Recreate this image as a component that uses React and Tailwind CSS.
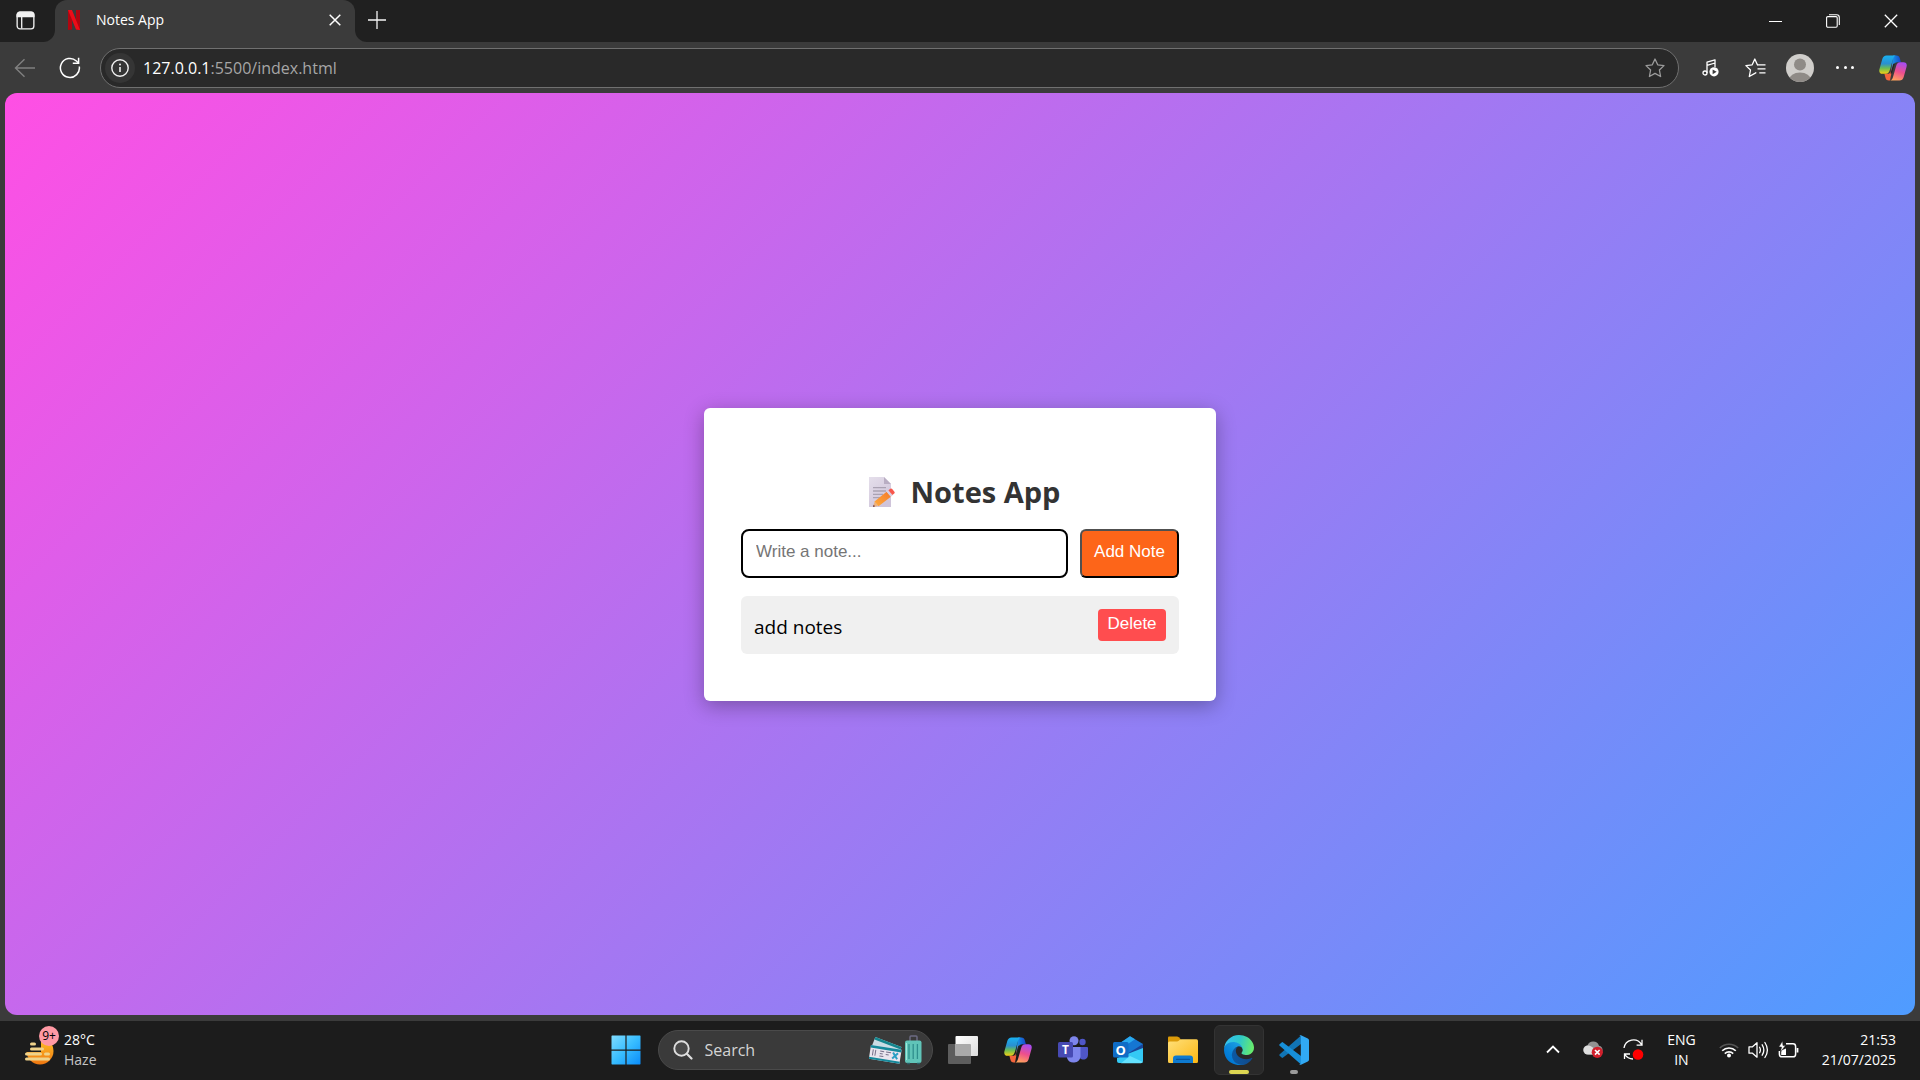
import React, { useState } from "react";

const TabActionsIcon = () => (
  <svg width="19" height="19" viewBox="0 0 20 20" fill="none" stroke="#f2f2f2" strokeWidth="1.4">
    <rect x="1.2" y="1.2" width="17.6" height="17.6" rx="3" />
    <path d="M1.2 6V4.200a3 3 0 0 1 3-3h11.600a3 3 0 0 1 3 3V6z" fill="#f2f2f2" />
    <path d="M6 6v12.500" />
  </svg>
);

const NLogo = () => (
  <svg width="12" height="20" viewBox="0 0 12 20">
    <path d="M0 0h4v19.6L0 20z" fill="#b00610" />
    <path d="M8 0h4v20l-4-.5z" fill="#b00610" />
    <path d="M0 0h4l8 20-4-.5z" fill="#ee0c18" />
  </svg>
);

const CloseIcon = ({ size = 12, width = 1.5 }) => (
  <svg width={size} height={size} viewBox="0 0 12 12" stroke="#fff" strokeWidth={width} fill="none">
    <path d="M.7.7l10.6 10.6M11.3.7L.7 11.3" />
  </svg>
);

const PlusIcon = () => (
  <svg width="18" height="18" viewBox="0 0 18 18" stroke="#f5f5f5" strokeWidth="1.3">
    <path d="M9 0v18M0 9h18" />
  </svg>
);

const RestoreIcon = () => (
  <svg width="14" height="14" viewBox="0 0 14 14" fill="none" stroke="#fff" strokeWidth="1.1">
    <rect x=".6" y="2.6" width="10.6" height="10.6" rx="1.2" />
    <path d="M3 .7h7.6a2.7 2.7 0 0 1 2.7 2.7V11" />
  </svg>
);

const BackIcon = () => (
  <svg width="22" height="20" viewBox="0 0 22 20" fill="none" stroke="#808080" strokeWidth="1.4">
    <path d="M21 10H1.5M10.5 1.3L1.5 10l9 8.7" />
  </svg>
);

const ReloadIcon = () => (
  <svg width="22" height="22" viewBox="0 0 22 22" fill="none" stroke="#fff" strokeWidth="1.5">
    <path d="M20.3 9.5A9.5 9.5 0 1 1 17.4 4L19.5 6" />
    <path d="M19.6.8v5.5h-5.8" />
  </svg>
);

const InfoIcon = () => (
  <svg width="18" height="18" viewBox="0 0 18 18" fill="none" stroke="#f0f0f0" strokeWidth="1.4">
    <circle cx="9" cy="9" r="8.2" />
    <path d="M9 8v5" strokeWidth="1.6" />
    <circle cx="9" cy="5.4" r="1" fill="#f0f0f0" stroke="none" />
  </svg>
);

const StarIcon = () => (
  <svg width="20" height="20" viewBox="0 0 20 20" fill="none" stroke="#9b9b9b" strokeWidth="1.3" strokeLinejoin="round">
    <path d="M10 1l2.7 5.8 6.3.8-4.6 4.4 1.2 6.5L10 15.4l-5.6 3.1 1.2-6.5L1 7.6l6.3-.8z" />
  </svg>
);

const MusicIcon = () => (
  <svg width="18" height="18" viewBox="0 0 18 18" fill="none" stroke="#fff" strokeWidth="1.3">
    <circle cx="3" cy="14" r="2" />
    <path d="M5 14V3.2l8-2.4V8M5 6.4l8-2.4" strokeLinejoin="round" />
    <circle cx="12" cy="12.8" r="4.6" fill="#fff" stroke="none" />
    <path d="M10.6 10.4v4.8l4-2.4z" fill="#3b3b3b" stroke="none" />
  </svg>
);

const FavoritesIcon = () => (
  <svg width="21" height="20" viewBox="0 0 21 20" fill="none" stroke="#fff" strokeWidth="1.3" strokeLinejoin="round">
    <path d="M13 6.8h-.6L9.8 1 7.2 6.8.9 7.6 5.5 12l-1.2 6.5 5.5-3.1 1.5-.9" />
    <path d="M12.5 6.8h8M12.5 10.8h8M14.3 14.8h6.2" />
  </svg>
);

const Avatar = () => (
  <svg width="28" height="28" viewBox="0 0 28 28">
    <clipPath id="avatar-clip"><circle cx="14" cy="14" r="14" /></clipPath>
    <g clipPath="url(#avatar-clip)">
      <rect width="28" height="28" fill="#d0cecb" />
      <circle cx="14" cy="10.5" r="6" fill="#8f8b87" />
      <ellipse cx="14" cy="26" rx="11" ry="7.6" fill="#8f8b87" />
    </g>
  </svg>
);

const CopilotIcon = ({ id }) => (
  <svg width="28" height="26" viewBox="0 0 28 26">
    <defs>
      <linearGradient id={id + "a"} x1="0" y1="0" x2="0" y2="1">
        <stop offset="0" stopColor="#18b2f2" /><stop offset=".45" stopColor="#2a8fd0" />
        <stop offset=".7" stopColor="#6cbd52" /><stop offset="1" stopColor="#f4cf14" />
      </linearGradient>
      <linearGradient id={id + "b"} x1=".6" y1="0" x2=".3" y2="1">
        <stop offset="0" stopColor="#a84cf0" /><stop offset=".5" stopColor="#ee4f8c" />
        <stop offset="1" stopColor="#ffa45c" />
      </linearGradient>
      <linearGradient id={id + "c"} x1="0" y1="0" x2="1" y2="0">
        <stop offset="0" stopColor="#18a0ee" /><stop offset="1" stopColor="#1746c8" />
      </linearGradient>
    </defs>
    <path d="M14 .4h3.4c2 0 3 1.2 3.5 3l1 3.8h-3.4c-2.600 0-3.600 1.300-4.200 3.400L12 18z" fill={"url(#" + id + "c)"} />
    <path d="M14.500 7L11 25.600H9.800c-2 0-3-1.200-3.400-3l-1-3.800h3.200c2 0 3-1.300 3.600-3.400z" fill="#f4643c" />
    <path d="M7.500.4h9.300c-1.700.5-2.300 2-2.800 3.600L11 14.600c-.8 2.800-2 4.200-4.200 4.200H3.500c-2.700 0-3.800-2-3-4.800L3.300 4C4 1.600 5.400.4 7.500.4z" fill={"url(#" + id + "a)"} />
    <path d="M20.500 25.600h-9.300c1.700-.5 2.300-2 2.800-3.600l3-10.600c.8-2.800 2-4.200 4.200-4.200h3.300c2.700 0 3.800 2 3 4.800L24.700 22c-.7 2.400-2.100 3.600-4.200 3.600z" fill={"url(#" + id + "b)"} />
    <path d="M14.300 8.800h1.800c-.6.700-.9 1.500-1.200 2.600l-2 7h-1.500z" fill="#242424" />
  </svg>
);

const MemoIcon = () => (
  <svg width="28" height="32" viewBox="0 0 28 32">
    <defs>
      <linearGradient id="sheet" x1="0" y1="0" x2=".6" y2="1">
        <stop offset="0" stopColor="#e5dfeb" /><stop offset="1" stopColor="#cfc4da" />
      </linearGradient>
      <linearGradient id="pencil" x1="0" y1="1" x2="1" y2="0">
        <stop offset="0" stopColor="#ffac3c" /><stop offset="1" stopColor="#f47a2c" />
      </linearGradient>
    </defs>
    <path d="M1 1h15l7 7v23H1z" fill="url(#sheet)" />
    <path d="M16 1l7 7h-7z" fill="#b9aec3" />
    <path d="M5 11.700h13M5 15h13M5 18.400h10M5 21.700h7" stroke="#aaa2b3" strokeWidth="1.300" />
    <path d="M5 31l1.800-5.800L9.900 30z" fill="#edb07c" />
    <path d="M5 31l.7-2.300 1.300 1.500z" fill="#542635" />
    <path d="M6.500 25.500L18.600 15.800l4.300 4.900L10.500 30.300z" fill="url(#pencil)" />
    <path d="M18.600 15.800l1.800-1.500 4.300 4.900-1.800 1.500z" fill="#d8d0e2" />
    <path d="M20.400 14.300l2-1.500c.7-.5 1.300-.4 1.800.2l2.200 2.700c.5.600.4 1.300-.2 1.800l-1.800 1.500z" fill="#f7574c" />
  </svg>
);

const HazeIcon = () => (
  <svg width="30" height="28" viewBox="0 0 30 28">
    <defs>
      <linearGradient id="sun" x1="0" y1="0" x2="0" y2="1">
        <stop offset="0" stopColor="#ffc62b" /><stop offset="1" stopColor="#ef7610" />
      </linearGradient>
    </defs>
    <circle cx="15" cy="13" r="13.500" fill="url(#sun)" />
    <path d="M0 0h16v14H0z" fill="#1c1c1c" />
    <path d="M6.500 6h3M6.500 11h11M1.500 16h14M20.500 16h3M1.500 21h22" stroke="#efd28a" strokeWidth="3" strokeLinecap="round" />
  </svg>
);

const StartIcon = () => (
  <svg width="30" height="30" viewBox="0 0 30 30">
    <defs>
      <linearGradient id="win" x1="0" y1="0" x2="1" y2="1">
        <stop offset="0" stopColor="#80dcff" /><stop offset=".5" stopColor="#38bdff" /><stop offset="1" stopColor="#0a8cfa" />
      </linearGradient>
    </defs>
    <path d="M1 .5h13.400v14H.5V1zM15.600.5H29l.5.5v13.500H15.600zM.5 15.700h13.900v13.800H1l-.5-.5zM15.600 15.700h13.900V29l-.5.500H15.600z" fill="url(#win)" />
  </svg>
);

const SearchIcon = () => (
  <svg width="20" height="20" viewBox="0 0 20 20" fill="none" stroke="#dedede" strokeLinecap="round">
    <circle cx="8.500" cy="8.500" r="7.200" strokeWidth="1.900" fill="#4a4a4a" />
    <path d="M13.800 13.800l4.700 4.700" strokeWidth="2.200" />
  </svg>
);

const TravelIcon = () => (
  <svg width="54" height="30" viewBox="0 0 54 30">
    <g transform="rotate(21 6 3)">
      <rect x="6" y="2" width="28" height="11" fill="#c9dce4" />
      <path d="M6 2h28v2.500H6z" fill="#14868f" />
    </g>
    <g transform="rotate(9 2 10)">
      <rect x="2" y="10" width="31" height="14" fill="#e9e4ee" />
      <path d="M2 10h31v2.600H2zM2 22h31v2H2z" fill="#15899b" />
      <path d="M5 14v6M7.500 14v6M12 14.500h4M12 17h3M12 19.500h4M18 14.500h5M18 17h3" stroke="#77708a" strokeWidth="1" />
      <path d="M25 14l5 6M30 14l-5 6" stroke="#2a9fc4" strokeWidth="2" />
    </g>
    <path d="M41 6V2q0-1 1-1h5q1 0 1 1v4" fill="none" stroke="#6c6b83" strokeWidth="1.500" />
    <rect x="36" y="5.500" width="16.500" height="22.500" rx="2" fill="#60c4b8" />
    <path d="M40 9v15M44.200 9v15M48.400 9v15" stroke="#2f8f8d" strokeWidth="1.300" />
    <path d="M37.500 8v17" stroke="#a0e6db" strokeWidth="1" />
    <path d="M38 28.500h3M48 28.500h3" stroke="#2c5f68" strokeWidth="1.500" />
  </svg>
);

const TaskViewIcon = () => (
  <svg width="30" height="28" viewBox="0 0 30 28">
    <defs>
      <linearGradient id="tv" x1="0" y1="0" x2="1" y2="1">
        <stop offset="0" stopColor="#fff" /><stop offset="1" stopColor="#dcdcdc" />
      </linearGradient>
    </defs>
    <rect y="8" width="23" height="20" rx="1" fill="#5d5d5d" />
    <rect x="7.500" width="22.500" height="20" rx="1" fill="url(#tv)" />
    <path d="M7.500 8H22a1 1 0 0 1 1 1v11H7.500z" fill="#aaa" />
  </svg>
);

const TeamsIcon = () => (
  <svg width="30" height="28" viewBox="0 0 30 28">
    <circle cx="24.500" cy="6" r="3.200" fill="#4f56c8" />
    <path d="M20 11h9a1 1 0 0 1 1 1v6.500c0 3.500-2 5-4.500 5S20 22 20 18.500z" fill="#4f56c8" />
    <circle cx="16" cy="4.800" r="4.500" fill="#7d85ec" />
    <path d="M9 11h13.500v9.500a7 7 0 0 1-13.500 1.500z" fill="#7d85ec" />
    <rect y="6" width="15" height="15.500" rx="1.500" fill="#474ab3" />
    <text x="7.500" y="17.500" textAnchor="middle" fontSize="12" fontWeight="700" fontFamily="Open Sans, sans-serif" fill="#fff">T</text>
  </svg>
);

const OutlookIcon = () => (
  <svg width="30" height="28" viewBox="0 0 30 28">
    <path d="M4 9L17 .3 30 8v5L17 20 4 18z" fill="#1576d2" />
    <path d="M5 8.500L17 .3l5 3L9 12z" fill="#29a9ee" />
    <path d="M30 8v5L17 20l-3-2z" fill="#1a4598" />
    <path d="M30 12v13a2 2 0 0 1-2 2H6a2 2 0 0 1-2-2v-3z" fill="#34c9f5" />
    <path d="M17 20l13 6-2 1.200H8z" fill="#64e2ff" />
    <rect y="6" width="15.500" height="15.500" rx="1.500" fill="#0f6cc6" />
    <text x="7.750" y="18.500" textAnchor="middle" fontSize="13" fontWeight="700" fontFamily="Open Sans, sans-serif" fill="#fff">O</text>
  </svg>
);

const FolderIcon = () => (
  <svg width="30" height="28" viewBox="0 0 30 28">
    <defs>
      <linearGradient id="fold" x1="0" y1="0" x2="1" y2="1">
        <stop offset="0" stopColor="#ffe07a" /><stop offset="1" stopColor="#fcb713" />
      </linearGradient>
    </defs>
    <path d="M0 1.500Q0 .5 1 .5h8q1 0 1.800.8L13 3.500v4H0z" fill="#dc9b09" />
    <path d="M0 7q0-1.500 1.500-1.500H9q1 0 1.800-.8l1-.9q.7-.5 1.700-.5h15Q30 3.300 30 5v20.500q0 1.500-1.500 1.500h-27Q0 27 0 25.500z" fill="url(#fold)" />
    <path d="M5 27v-4.500q0-3 3-3h14q3 0 3 3V27z" fill="#0e7ad0" />
    <path d="M8.500 23.300h13" stroke="#08559e" strokeWidth="1.300" strokeLinecap="round" />
  </svg>
);

const EdgeIcon = () => (
  <svg width="30" height="30" viewBox="0 0 256 256">
    <defs>
      <linearGradient id="e1" x1="63" y1="177" x2="241" y2="177" gradientUnits="userSpaceOnUse"><stop offset="0" stopColor="#0c59a4" /><stop offset="1" stopColor="#114a8b" /></linearGradient>
      <linearGradient id="e2" x1="157" y1="100" x2="46" y2="221" gradientUnits="userSpaceOnUse"><stop offset="0" stopColor="#1b9de2" /><stop offset=".2" stopColor="#1595df" /><stop offset=".7" stopColor="#0680d7" /><stop offset="1" stopColor="#0078d4" /></linearGradient>
      <linearGradient id="e3" x1="10" y1="60" x2="240" y2="120" gradientUnits="userSpaceOnUse"><stop offset="0" stopColor="#35c1f1" /><stop offset=".5" stopColor="#2fc9c8" /><stop offset="1" stopColor="#66eb6e" /></linearGradient>
    </defs>
    <path fill="url(#e1)" d="M235.700 195.500a93.700 93.700 0 0 1-10.600 4.700 101.900 101.900 0 0 1-35.900 6.400c-47.300 0-88.500-32.500-88.500-74.300a31.500 31.500 0 0 1 16.400-27.300c-42.800 1.800-53.800 46.400-53.800 72.500 0 74 68.100 81.400 82.800 81.400 7.900 0 19.800-2.300 27-4.600l1.300-.4a128.300 128.300 0 0 0 66.600-52.800 4 4 0 0 0-5.300-5.600z" />
    <path fill="url(#e2)" d="M105.700 241.400a79.200 79.200 0 0 1-22.700-21.300 80.700 80.700 0 0 1 29.500-120c3.200-1.500 8.500-4.100 15.600-4a32.400 32.400 0 0 1 25.700 13 31.900 31.900 0 0 1 6.300 18.700c0-.2 24.500-79.600-80-79.600-43.900 0-80 41.600-80 78.200a130.200 130.200 0 0 0 12.100 56 128 128 0 0 0 156.400 67 75.500 75.500 0 0 1-62.800-8z" />
    <path fill="url(#e3)" d="M152.300 148.900c-.9 1-3.400 2.500-3.400 5.600 0 2.600 1.700 5.200 4.800 7.300 14.300 10 41.400 8.600 41.500 8.600a59.600 59.600 0 0 0 30.300-8.300A61.400 61.400 0 0 0 256 109.200c.3-22.400-8-37.300-11.300-43.900C223.500 23.900 177.700 0 128 0A128 128 0 0 0 0 126.200c.5-36.500 36.800-66 80-66 3.500 0 23.500.3 42 10 16.300 8.600 24.900 19 30.800 29.200 6.200 10.700 7.300 24.100 7.300 29.500s-2.700 13.300-7.800 20z" />
  </svg>
);

const CodeIcon = () => (
  <svg width="30" height="30" viewBox="0 0 30 30">
    <path d="M.6 20.700l2 1.900q.7.600 1.500 0L22 9V1.500q0-.9-.8-.3L.7 19.200q-.8.700-.1 1.500z" fill="#1174b4" />
    <path d="M.6 9.300l2-1.900q.7-.6 1.500 0L22 21v7.500q0 .9-.8.3L.7 10.800q-.8-.7-.1-1.500z" fill="#178fd8" />
    <path d="M22 .2l6.800 3.200Q30 4 30 5.200v19.600q0 1.200-1.200 1.800L22 29.800q-1.300.3-1.800-.8.900.5 1.600-.6V1.600q-.7-1.100-1.600-.6.500-1.100 1.800-.8z" fill="#31a9f4" />
  </svg>
);

const CloudErrorIcon = () => (
  <svg width="20" height="17" viewBox="0 0 20 17">
    <path d="M5 13.500a4.500 4.500 0 0 1-.6-9A6.200 6.200 0 0 1 16 4.700a4.500 4.500 0 0 1 0 8.800z" fill="#929292" />
    <path d="M5 13.500a4.500 4.500 0 0 1 0-9q3.500 0 8 5v4z" fill="#dedede" />
    <circle cx="14.300" cy="11.300" r="5.600" fill="#d1202c" />
    <path d="M12 9l4.600 4.600M16.600 9L12 13.600" stroke="#fff" strokeWidth="1.600" />
  </svg>
);

const UpdateIcon = () => (
  <svg width="21" height="21" viewBox="0 0 21 21" fill="none" stroke="#fff" strokeWidth="1.300">
    <path d="M1 9A9.500 9.500 0 0 1 18.500 5.500M19 .8v5.400h-5.400M7 15H1.500v5M1.500 15.200q3.300 4.800 8.500 4.800" />
    <circle cx="15" cy="15.500" r="5.300" fill="#f00" stroke="none" />
  </svg>
);

const WifiIcon = () => (
  <svg width="20" height="16" viewBox="0 0 20 16" fill="none" strokeWidth="1.600">
    <path d="M.8 6a13 13 0 0 1 18.400 0" stroke="#555" />
    <path d="M3.200 8.800a9.600 9.600 0 0 1 13.600 0M5.800 11.600a6 6 0 0 1 8.400 0" stroke="#fff" />
    <circle cx="10" cy="13.600" r="2" fill="#fff" />
  </svg>
);

const SpeakerIcon = () => (
  <svg width="21" height="18" viewBox="0 0 21 18" fill="none" stroke="#fff" strokeWidth="1.300" strokeLinejoin="round" strokeLinecap="round">
    <path d="M1 5.800h3.500L9 1.800v14.400l-4.500-4H1z" />
    <path d="M11.600 6.200q1.600 2.800 0 5.600M14.200 3.800q3.300 5.200 0 10.400M16.900 1.500q5 7.500 0 15" />
  </svg>
);

const BatteryIcon = () => (
  <svg width="21" height="18" viewBox="0 0 21 18" fill="none" stroke="#fff" strokeWidth="1.500">
    <path d="M8 2.800h7a2.600 2.600 0 0 1 2.600 2.600v7.800a2.600 2.600 0 0 1-2.600 2.600H4a2.600 2.600 0 0 1-2.600-2.600V10" />
    <path d="M19.500 7v4.500" strokeWidth="1.800" />
    <path d="M3.200 14V9.500L8 7.500V14z" fill="#fff" stroke="none" />
    <path d="M4.500 0L.8 6h2.700L2.500 11l5-6.400H5z" fill="#fff" stroke="#1c1c1c" strokeWidth=".5" />
  </svg>
);

const TaskButton = ({ label, children }) => (
  <button aria-label={label} className="flex h-[50px] w-[55px] items-center justify-center">{children}</button>
);

function TitleBar() {
  return (
    <header className="flex h-[42px] shrink-0 justify-between bg-[#202020]">
      <div className="flex min-w-0">
        <div className="bg-[#3b3b3b]">
          <button aria-label="Tab actions" className="flex h-full w-[55px] items-center justify-center rounded-br-xl bg-[#202020] pr-[5px] pb-px">
            <TabActionsIcon />
          </button>
        </div>
        <div className="flex w-[300px] items-center rounded-t-xl bg-[#3b3b3b] pr-[14px] pb-0.5 pl-[13px] text-white">
          <NLogo />
          <span className="grow pl-4 text-sm leading-5">Notes App</span>
          <button aria-label="Close tab"><CloseIcon /></button>
        </div>
        <div className="bg-[#3b3b3b]">
          <button aria-label="New tab" className="flex h-full w-11 items-center justify-center rounded-bl-xl bg-[#202020] pb-[3px]">
            <PlusIcon />
          </button>
        </div>
      </div>
      <div className="flex">
        <button aria-label="Minimize" className="flex w-[58px] items-center justify-center"><span className="h-px w-[13px] bg-white" /></button>
        <button aria-label="Restore" className="flex w-[58px] items-center justify-center"><RestoreIcon /></button>
        <button aria-label="Close" className="flex w-[58px] items-center justify-center"><CloseIcon size={14} width={1.1} /></button>
      </div>
    </header>
  );
}

function Toolbar() {
  return (
    <nav className="flex h-[51px] shrink-0 items-center pr-[13px] pl-[14px]">
      <button aria-label="Back"><BackIcon /></button>
      <button aria-label="Refresh" className="ml-[23px]"><ReloadIcon /></button>
      <div className="ml-[19px] flex h-10 grow items-center rounded-full border border-[#707070] bg-[#292929] pr-[13px] pl-1 text-white">
        <button aria-label="Site information" className="flex size-[30px] items-center justify-center rounded-full bg-[#353535]"><InfoIcon /></button>
        <p className="grow pl-2 text-base leading-6">127.0.0.1<span className="text-[#a6a6a6]">:5500/index.html</span></p>
        <button aria-label="Add to favorites"><StarIcon /></button>
      </div>
      <button aria-label="Media" className="ml-[23px]"><MusicIcon /></button>
      <button aria-label="Favorites" className="ml-[25px]"><FavoritesIcon /></button>
      <button aria-label="Profile" className="ml-5"><Avatar /></button>
      <button aria-label="Settings and more" className="ml-[22px] flex w-[18px] justify-between">
        <span className="size-[3px] rounded-full bg-white" />
        <span className="size-[3px] rounded-full bg-white" />
        <span className="size-[3px] rounded-full bg-white" />
      </button>
      <button aria-label="Copilot" className="ml-[25px]"><CopilotIcon id="top" /></button>
    </nav>
  );
}

function NotesCard() {
  const [notes, setNotes] = useState(["add notes"]);
  const [draft, setDraft] = useState("");
  const add = (e) => {
    e.preventDefault();
    if (draft.trim()) {
      setNotes([...notes, draft.trim()]);
      setDraft("");
    }
  };
  return (
    <section className="w-full max-w-[512px] rounded-md bg-white px-[37px] pt-16 pb-[47px] shadow-[0_5px_20px_rgba(0,0,0,0.3)]">
      <h1 className="flex items-center justify-center gap-[15px] pl-2 text-[29px] leading-10 font-bold text-[#333]">
        <MemoIcon />
        <span>Notes App</span>
      </h1>
      <form onSubmit={add} className="mt-[17px] flex gap-3 font-['Liberation_Sans',sans-serif] text-[17px] leading-5">
        <input
          aria-label="Note"
          value={draft}
          onChange={(e) => setDraft(e.target.value)}
          placeholder="Write a note..."
          className="h-[49px] min-w-0 grow rounded-lg border-2 border-black px-[13px] pb-0.5 text-black outline-none placeholder:text-[#757575]"
        />
        <button className="h-[49px] w-[99px] rounded-md border-2 border-t-[#505050] border-r-black border-b-black border-l-[#505050] bg-[#fd6519] pb-0.5 text-white">
          Add Note
        </button>
      </form>
      <ul className="mt-[18px] space-y-3">
        {notes.map((note, i) => (
          <li key={i} className="flex items-start justify-between rounded-md bg-[#f0f0f0] p-[13px]">
            <span className="pt-1 text-[19px] leading-7 text-black">{note}</span>
            <button
              onClick={() => setNotes(notes.filter((_, n) => n !== i))}
              className="h-8 w-[68px] rounded bg-[#ff4d4f] pb-0.5 font-['Liberation_Sans',sans-serif] text-[17px] leading-5 text-white"
            >
              Delete
            </button>
          </li>
        ))}
      </ul>
    </section>
  );
}

function Taskbar() {
  return (
    <footer className="grid h-[59px] shrink-0 grid-cols-[1fr_auto_1fr] items-center bg-[#1c1c1c] pb-0.5 text-sm leading-5 text-white">
      <button className="flex items-center gap-[9px] justify-self-start pl-[25px] text-left">
        <span className="relative pt-1">
          <HazeIcon />
          <span className="absolute -top-2 left-[14px] flex size-5 items-center justify-center rounded-full bg-[#ff99a4] text-xs text-black">9+</span>
        </span>
        <span>
          <span className="block">28°C</span>
          <span className="block text-[#c4c4c4]">Haze</span>
        </span>
      </button>
      <div className="flex items-center">
        <TaskButton label="Start"><StartIcon /></TaskButton>
        <label className="mr-[3px] ml-1 flex h-10 w-[275px] items-center rounded-full border border-[#4a4a4a] bg-[#3a3a3a] pr-[9px] pl-[14px]">
          <SearchIcon />
          <input aria-label="Search" placeholder="Search" className="ml-3 w-0 grow bg-transparent text-base leading-6 outline-none placeholder:text-[#d4d4d4]" />
          <TravelIcon />
        </label>
        <TaskButton label="Task view"><TaskViewIcon /></TaskButton>
        <TaskButton label="Copilot"><CopilotIcon id="task" /></TaskButton>
        <TaskButton label="Teams"><TeamsIcon /></TaskButton>
        <TaskButton label="Outlook"><OutlookIcon /></TaskButton>
        <TaskButton label="File Explorer"><FolderIcon /></TaskButton>
        <button aria-label="Edge" className="relative mx-[3px] flex h-[50px] w-[50px] items-center justify-center rounded-md border border-[#333] bg-[#292929]">
          <EdgeIcon />
          <span className="absolute bottom-0 h-1 w-5 rounded-full bg-[#dcd652]" />
        </button>
        <button aria-label="Visual Studio Code" className="relative flex h-[50px] w-[55px] items-center justify-center">
          <CodeIcon />
          <span className="absolute bottom-[1px] h-1 w-2 rounded-full bg-[#9a9a9a]" />
        </button>
      </div>
      <div className="flex items-center justify-self-end pr-6">
        <button aria-label="Show hidden icons">
          <svg width="14" height="9" viewBox="0 0 14 9" fill="none" stroke="#fff" strokeWidth="1.800"><path d="M1 7.500l6-6 6 6" /></svg>
        </button>
        <button aria-label="OneDrive" className="ml-[23px]"><CloudErrorIcon /></button>
        <button aria-label="Windows Update" className="ml-5"><UpdateIcon /></button>
        <button className="ml-[23px] text-center"><span className="block">ENG</span><span className="block">IN</span></button>
        <button aria-label="Network, volume and battery" className="ml-[23px] flex items-center gap-[9px]">
          <WifiIcon /><SpeakerIcon /><BatteryIcon />
        </button>
        <button className="ml-[23px] text-right"><span className="block">21:53</span><span className="block">21/07/2025</span></button>
      </div>
    </footer>
  );
}

export default function App() {
  return (
    <div className="flex h-screen w-full flex-col bg-[#3b3b3b] font-['Open_Sans','Noto_Sans',sans-serif]">
      <TitleBar />
      <Toolbar />
      <main className="mx-[5px] mb-[6px] flex grow items-center justify-center rounded-xl bg-[linear-gradient(135deg,#ff4fe4,#4f9cff)]">
        <NotesCard />
      </main>
      <Taskbar />
    </div>
  );
}
